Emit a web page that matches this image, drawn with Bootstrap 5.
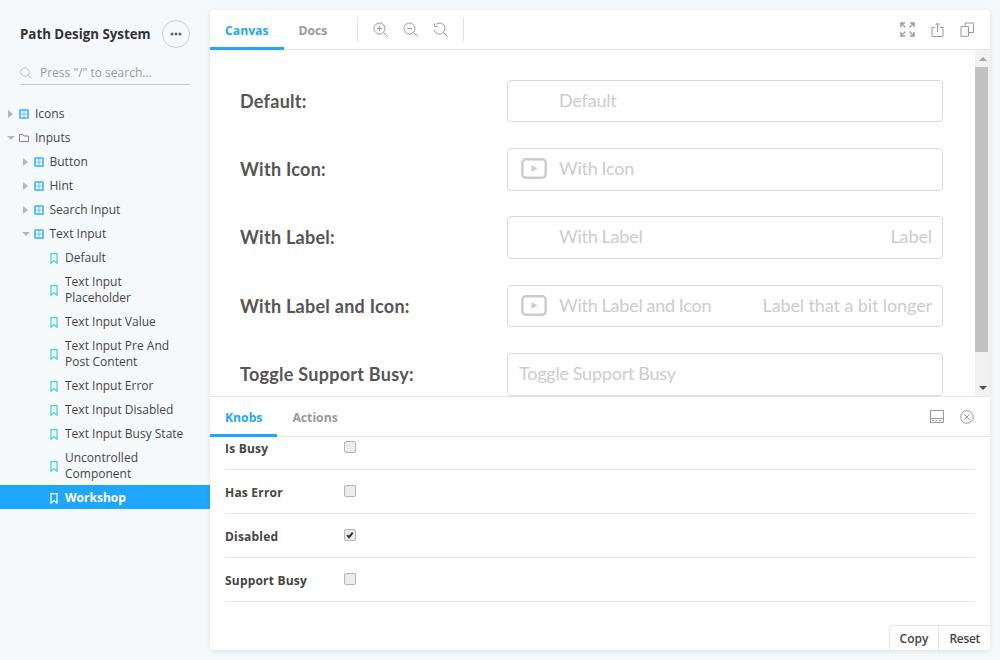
<!DOCTYPE html>
<html lang="en">
<head>
  <meta charset="UTF-8" />
  <title>Path Design System</title>
  <link href="https://cdn.jsdelivr.net/npm/bootstrap@5.3.0/dist/css/bootstrap.min.css" rel="stylesheet" />
  <style>
    html, body { height: 100%; }
    body { background: #f6f9fc; overflow: hidden; font-family: "Open Sans", sans-serif; color: #333; }
    svg { display: block; flex: none; }

    /* sidebar */
    .side { width: 210px; flex: none; }
    .side-head { padding: 20px 20px 0; }
    .side-title { font-size: 13.3px; font-weight: 700; color: #333; padding-top: 2px; }
    .more-btn { width: 28px; height: 28px; border: 1px solid #ccc; border-radius: 50%; background: transparent; padding: 0; color: #666; }
    .side-search { margin: 12px 20px 16px; height: 25px; padding-top: 2px; border-bottom: 1px solid #c6c9cc; font-size: 12px; color: #999; }
    .tree-row { padding: 5px 0 3px; font-size: 12px; line-height: 16px; color: #444; min-height: 24px; }
    .tree-row.depth0 { padding-left: 8px; }
    .tree-row.depth1 { padding-left: 23px; }
    .tree-row.depth2 { padding-left: 50px; padding-right: 20px; }
    .tree-row.active { background: #1ea7fd; color: #fff; font-weight: 700; }
    .caret-slot { width: 6px; margin-right: 5px; }
    .tree-icon { margin-right: 6px; }
    .depth1 .tree-icon { margin-right: 5.5px; }
    .leaf-icon { margin-right: 7px; }

    /* panels */
    .stage { padding: 10px 10px 10px 0; min-width: 0; }
    .sheet { background: #fff; border-radius: 4px; box-shadow: 0 1px 5px rgba(0,0,0,.1); overflow: hidden; position: relative; }
    .tab-bar { height: 40px; border-bottom: 1px solid #e6e6e6; flex: none; }
    .tab-bar .nav-link { padding: 0 15px; height: 40px; line-height: 41px; font-size: 12.2px; font-weight: 700; color: #999; border-bottom: 3px solid transparent; border-radius: 0; }
    .tab-bar .nav-link.active { color: #1ea7fd; border-bottom-color: #1ea7fd; }
    .tab-rule { width: 1px; height: 24px; background: #e2e2e2; }
    .rule-first { margin-left: 15px; margin-right: 7px; }
    .rule-second { margin-left: 8px; }
    .tool-btn { width: 30px; height: 30px; background: none; border: 0; padding: 0; color: #999; }

    /* canvas */
    .preview { height: 346px; flex: none; overflow: hidden; border-bottom: 1px solid #e6e6e6; box-sizing: content-box; }
    .preview-body { padding: 29.7px 32px 0 30px; gap: 25.6px; font-family: Lato, sans-serif; }
    .story-row { height: 42.7px; flex: none; }
    .story-label { width: 267px; flex: none; padding-top: .6px; font-size: 18px; font-weight: 700; color: #555; letter-spacing: .27px; }
    .fake-input { flex: 1; height: 100%; border: 1px solid #d9d9d9; border-radius: 4px; padding: 0 10px 1.4px 11px; font-size: 18px; color: #ccc; }
    .input-text { letter-spacing: -.2px; word-spacing: -.5px; }
    .input-post { letter-spacing: -.1px; }
    .fake-input .icon-slot { width: 40px; flex: none; padding-left: 2px; }
    .fake-scroll { width: 15px; flex: none; background: #f1f1f1; }
    .scroll-arrow { height: 17px; }
    .scroll-thumb { height: 285px; width: 13px; background: #c1c1c1; }

    /* knobs */
    .knob-scroll { overflow: hidden; flex: 1; padding: 0 15px; }
    .knob-list { margin-top: -11px; }
    .knob-row { height: 44px; border-bottom: 1px solid #e6e6e6; font-size: 12px; font-weight: 700; color: #444; }
    .knob-name { width: 119px; flex: none; padding-top: 2px; letter-spacing: .2px; }
    .knob-row .form-check-input { width: 12px; height: 12px; margin: -2px 0 0; border-color: #b5b5b5; background-color: #ececec; border-radius: 2px; opacity: 1; box-shadow: none; }
    .knob-row .form-check-input:checked { background-color: #ececec; border-color: #b5b5b5; background-image: url("data:image/svg+xml,%3csvg xmlns='http://www.w3.org/2000/svg' viewBox='0 0 12 12'%3e%3cpath fill='none' stroke='%23333' stroke-width='2.4' d='M2.5 6.2l2.4 2.4 4.4-5.4'/%3e%3c/svg%3e"); }
    .corner-btns { position: absolute; right: 0; bottom: 0; height: 25px; background: #fff; border-top: 1px solid #e6e6e6; border-left: 1px solid #e6e6e6; border-top-left-radius: 4px; }
    .corner-btns button { height: 24px; background: none; border: 0; padding: 2px 10px 0; font-size: 12px; font-weight: 600; color: #444; }
    .corner-btns button + button { border-left: 1px solid #e6e6e6; letter-spacing: -.3px; }
  </style>
</head>
<body>
  <div class="d-flex h-100">
    <!-- Sidebar -->
    <aside class="side">
      <div class="side-head d-flex align-items-center justify-content-between">
        <div class="side-title">Path Design System</div>
        <button class="more-btn d-flex align-items-center justify-content-center" type="button" aria-label="More">
          <svg width="12" height="4" viewBox="0 0 12 4" fill="#666"><circle cx="2" cy="2" r="1.5"/><circle cx="6" cy="2" r="1.5"/><circle cx="10" cy="2" r="1.5"/></svg>
        </button>
      </div>
      <div class="side-search d-flex align-items-center gap-2">
        <svg width="12" height="12" viewBox="0 0 12 12" fill="none" stroke="#bbb" stroke-width="1"><circle cx="5" cy="5" r="4.2"/><path d="M8 8l3.5 3.5"/></svg>
        <span>Press "/" to search...</span>
      </div>
      <nav id="tree"></nav>
    </aside>

    <!-- Main -->
    <main class="stage flex-grow-1 d-flex">
      <div class="sheet flex-grow-1 d-flex flex-column">
        <div class="tab-bar d-flex align-items-center">
          <ul class="nav">
            <li class="nav-item"><a class="nav-link active" href="#">Canvas</a></li>
            <li class="nav-item"><a class="nav-link" href="#">Docs</a></li>
          </ul>
          <div class="tab-rule rule-first"></div>
          <button class="tool-btn d-flex align-items-center justify-content-center" type="button" aria-label="Zoom in">
            <svg width="15" height="15" viewBox="0 0 15 15" fill="none" stroke="currentColor"><circle cx="6.5" cy="6.5" r="5.5"/><path d="M10.5 10.5l4 4M6.5 4v5M4 6.5h5"/></svg>
          </button>
          <button class="tool-btn d-flex align-items-center justify-content-center" type="button" aria-label="Zoom out">
            <svg width="15" height="15" viewBox="0 0 15 15" fill="none" stroke="currentColor"><circle cx="6.5" cy="6.5" r="5.5"/><path d="M10.5 10.5l4 4M4 6.5h5"/></svg>
          </button>
          <button class="tool-btn d-flex align-items-center justify-content-center" type="button" aria-label="Reset zoom">
            <svg width="15" height="15" viewBox="0 0 15 15" fill="none" stroke="currentColor"><path d="M3 2.3A5.5 5.5 0 1 1 1.2 8M10.5 10.5l4 4M1.5 1.5v3h3"/></svg>
          </button>
          <div class="tab-rule rule-second"></div>
          <div class="ms-auto d-flex me-2">
            <button class="tool-btn d-flex align-items-center justify-content-center" type="button" aria-label="Full screen">
              <svg width="15" height="15" viewBox="0 0 15 15" fill="none" stroke="currentColor" stroke-width="1.2"><path d="M1 1l4.500 4.500M14 1L9.500 5.500M1 14l4.500-4.500M14 14L9.500 9.500"/><path d="M1 5V1h4M10 1h4v4M1 10v4h4M10 14h4v-4" stroke-width="1.500"/></svg>
            </button>
            <button class="tool-btn d-flex align-items-center justify-content-center" type="button" aria-label="Open in new tab">
              <svg width="13" height="15" viewBox="0 0 13 15" fill="none" stroke="currentColor"><path d="M4 5.500H1v9h11v-9H9M6.500 10V1M4.500 3l2-2 2 2"/></svg>
            </button>
            <button class="tool-btn d-flex align-items-center justify-content-center" type="button" aria-label="Copy link">
              <svg width="14" height="15" viewBox="0 0 14 15" fill="none" stroke="currentColor"><path d="M1 4.500h7.500v9.800H1zM5 4.500V1h8.500v9.500h-5"/></svg>
            </button>
          </div>
        </div>

        <div class="preview d-flex">
          <div class="preview-body flex-grow-1 d-flex flex-column" id="stories"></div>
          <div class="fake-scroll d-flex flex-column">
            <div class="scroll-arrow d-flex align-items-center justify-content-center">
              <svg width="8" height="4" viewBox="0 0 8 4" fill="#a3a3a3"><path d="M4 0l4 4H0z"/></svg>
            </div>
            <div class="scroll-thumb"></div>
            <div class="scroll-arrow d-flex align-items-center justify-content-center mt-auto">
              <svg width="8" height="4" viewBox="0 0 8 4" fill="#505050"><path d="M0 0h8L4 4z"/></svg>
            </div>
          </div>
        </div>

        <div class="tab-bar d-flex align-items-center">
          <ul class="nav">
            <li class="nav-item"><a class="nav-link active" href="#">Knobs</a></li>
            <li class="nav-item"><a class="nav-link" href="#">Actions</a></li>
          </ul>
          <div class="ms-auto d-flex me-2">
            <button class="tool-btn d-flex align-items-center justify-content-center" type="button" aria-label="Dock panel">
              <svg width="14" height="13" viewBox="0 0 14 13" fill="none" stroke="currentColor"><path d="M.500.500h13v12H.500z"/><path d="M1 8.500h12" /><path d="M2 10.500h10" stroke-dasharray="2 1.500"/></svg>
            </button>
            <button class="tool-btn d-flex align-items-center justify-content-center" type="button" aria-label="Close panel">
              <svg width="14" height="14" viewBox="0 0 14 14" fill="none" stroke="currentColor"><circle cx="7" cy="7" r="6.300"/><path d="M4.300 4.300l5.400 5.400M9.700 4.300l-5.400 5.400"/></svg>
            </button>
          </div>
        </div>

        <div class="knob-scroll">
          <div class="knob-list" id="knobs"></div>
        </div>

        <div class="corner-btns d-flex">
          <button type="button">Copy</button>
          <button type="button">Reset</button>
        </div>
      </div>
    </main>
  </div>

  <script>
    const gridIcon = '<svg class="tree-icon" width="10" height="10" viewBox="0 0 10 10"><rect width="10" height="10" rx="1.500" fill="#1ea7fd" opacity=".7"/><path d="M2 2h2.500v2.500H2zM5.500 2H8v2.500H5.500zM2 5.500h2.500V8H2zM5.500 5.500H8V8H5.500z" fill="#fff"/></svg>';
    const folderIcon = '<svg class="tree-icon" width="10" height="10" viewBox="0 0 10 10" fill="none" stroke="#8d6fe0"><path d="M.500 1.500h3.500l1 1.500h4.500v5.500H.500z"/></svg>';
    const leafIcon = '<svg class="leaf-icon" width="8" height="11" viewBox="0 0 8 11" fill="none" stroke="#37d5d3" stroke-width="1.200"><path d="M1 .600h6v9.600L4 7.500l-3 2.700z"/></svg>';
    const closedCaret = '<svg width="5" height="8" viewBox="0 0 5 8" fill="#b5b5b5"><path d="M0 0l5 4-5 4z"/></svg>';
    const openCaret = '<svg width="8" height="4" viewBox="0 0 8 4" fill="#b5b5b5" style="margin-left:-1px"><path d="M0 0h8L4 4z"/></svg>';

    const tree = [
      ["Icons", 0, "closed"], ["Inputs", 0, "folder"], ["Button", 1, "closed"], ["Hint", 1, "closed"],
      ["Search Input", 1, "closed"], ["Text Input", 1, "open"],
      ["Default", 2], ["Text Input Placeholder", 2], ["Text Input Value", 2], ["Text Input Pre And Post Content", 2],
      ["Text Input Error", 2], ["Text Input Disabled", 2], ["Text Input Busy State", 2], ["Uncontrolled Component", 2],
      ["Workshop", 2]
    ];
    document.getElementById("tree").innerHTML = tree.map(([name, depth, kind]) => {
      if (depth === 2) {
        const active = name === "Workshop" ? " active" : "";
        const icon = active ? leafIcon.replace("#37d5d3", "#fff") : leafIcon;
        return `<div class="tree-row depth2 d-flex align-items-center${active}">${icon}<span>${name}</span></div>`;
      }
      const caret = kind === "closed" ? closedCaret : openCaret;
      const icon = kind === "folder" ? folderIcon : gridIcon;
      return `<div class="tree-row depth${depth} d-flex align-items-center"><span class="caret-slot d-flex align-items-center">${caret}</span>${icon}<span>${name}</span></div>`;
    }).join("");

    const playIcon = '<svg width="26" height="21" viewBox="0 0 26 21" fill="none" stroke="#ccc" stroke-width="2.500"><rect x="1.300" y="1.300" width="23.400" height="18.400" rx="3.500"/><path d="M10.500 7l6 3.500-6 3.500z" fill="#ccc" stroke="none"/></svg>';
    const stories = [
      ["Default:", "Default", false, "", true],
      ["With Icon:", "With Icon", true, "", true],
      ["With Label:", "With Label", false, "Label", true],
      ["With Label and Icon:", "With Label and Icon", true, "Label that a bit longer", true],
      ["Toggle Support Busy:", "Toggle Support Busy", false, "", false]
    ];
    document.getElementById("stories").innerHTML = stories.map(([label, text, hasIcon, post, slot]) => `
      <div class="story-row d-flex align-items-center">
        <div class="story-label">${label}</div>
        <div class="fake-input d-flex align-items-center">
          ${slot ? `<span class="icon-slot">${hasIcon ? playIcon : ""}</span>` : ""}
          <span class="input-text">${text}</span>
          ${post ? `<span class="input-post ms-auto">${post}</span>` : ""}
        </div>
      </div>`).join("");

    const knobs = [["Is Busy", false], ["Has Error", false], ["Disabled", true], ["Support Busy", false]];
    document.getElementById("knobs").innerHTML = knobs.map(([name, on]) => `
      <div class="knob-row d-flex align-items-center">
        <div class="knob-name">${name}</div>
        <input class="form-check-input" type="checkbox" ${on ? "checked" : ""} aria-label="${name}">
      </div>`).join("");
  </script>
  <script src="https://cdn.jsdelivr.net/npm/bootstrap@5.3.0/dist/js/bootstrap.bundle.min.js"></script>
</body>
</html>
